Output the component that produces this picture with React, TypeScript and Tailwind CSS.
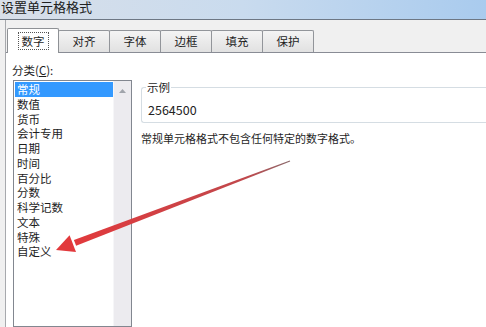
const font = { fontFamily: '"Noto Sans CJK SC", "Noto Sans", sans-serif' };

const categories = ["常规", "数值", "货币", "会计专用", "日期", "时间", "百分比", "分数", "科学记数", "文本", "特殊", "自定义"];
const tabs = ["数字", "对齐", "字体", "边框", "填充", "保护"];

export default function App() {
  return (
    <div className="relative w-[486px] h-[327px] overflow-hidden bg-[#f0f0f0] flex flex-col text-[#1e1e1e]" style={font}>
      {/* title bar */}
      <div className="h-[19px] shrink-0 bg-gradient-to-r from-[#d8dfe9] via-[#c9dbee] to-[#a9cbee] overflow-hidden">
        <div className="text-[13px] leading-[14px] pl-px text-[#202020]">设置单元格格式</div>
      </div>
      <div className="h-px shrink-0 bg-[#6d7784]" />

      <div className="flex-1 flex flex-col ml-[5px] border-l border-[#a7a9ad]">
        {/* tabs */}
        <div className="h-[32px] shrink-0 flex items-end pl-px">
          {tabs.map((t, i) =>
            i === 0 ? (
              <div key={t} className="relative z-10 w-[52px] h-[25px] -mb-px bg-white border border-b-0 border-[#8e9195] rounded-t-[2px] flex items-center justify-center">
                <span className="text-[11.5px] leading-[14px] px-[3px] py-px border border-dotted border-[#555]">{t}</span>
              </div>
            ) : (
              <div key={t} className="w-[52px] h-[22px] -ml-px bg-gradient-to-b from-[#f4f4f4] to-[#e1e1e1] border border-b-0 border-[#92959a] rounded-t-[2px] flex items-center justify-center text-[11.5px]">
                {t}
              </div>
            )
          )}
        </div>

        {/* pane */}
        <div className="flex-1 bg-white border-t border-[#898c95] pl-[7px] pt-[10px] flex flex-col">
          <div className="text-[11.5px] leading-[14px] mb-[3px] -ml-px">
            分类(<span className="underline">C</span>):
          </div>
          <div className="flex-1 flex gap-[9px]">
            {/* list box */}
            <div className="w-[119px] border border-[#828790] flex">
              <div className="flex-1 pt-px">
                {categories.map((c, i) => (
                  <div
                    key={c}
                    className={`text-[11.5px] leading-[14.75px] px-[2px] ml-px ${i === 0 ? "bg-[#3399ff] text-white" : ""}`}
                  >
                    {c}
                  </div>
                ))}
              </div>
              <div className="w-[18px] bg-[#ecebef] border-l border-[#f6f6f8] flex justify-center pt-[8px]">
                <svg width="7" height="4" viewBox="0 0 7 4">
                  <path d="M0 4 L3.5 0 L7 4 Z" fill="#a0a4ab" />
                </svg>
              </div>
            </div>

            {/* right column */}
            <div className="flex-1 flex flex-col">
              <div className="relative mt-[7px] h-[36px] border border-r-0 border-[#d5dde3] rounded-l-[3px] pl-[6px] pt-[15px]">
                <span className="absolute -top-[8px] left-[4px] bg-white px-px text-[11.5px] leading-[14px]">示例</span>
                <div className="text-[12.5px] leading-[14px] text-[#222]">2564500</div>
              </div>
              <div className="mt-[8px] text-[11px] leading-[14px]">常规单元格格式不包含任何特定的数字格式。</div>
            </div>
          </div>
        </div>
      </div>

      {/* red arrow overlay */}
      <svg className="absolute inset-0 pointer-events-none" width="486" height="327" viewBox="0 0 486 327">
        <defs>
          <linearGradient id="shaft" x1="290" y1="161" x2="72" y2="244" gradientUnits="userSpaceOnUse">
            <stop offset="0" stopColor="#8a6a6c" />
            <stop offset="0.2" stopColor="#c0484c" />
            <stop offset="1" stopColor="#e2393c" />
          </linearGradient>
        </defs>
        <polygon points="290.2,161.5 289.8,160.5 73.9,239.9 76.1,245.7" fill="url(#shaft)" />
        <polygon points="56,250 69.6,235.2 76,252" fill="#e2393c" />
      </svg>
    </div>
  );
}
